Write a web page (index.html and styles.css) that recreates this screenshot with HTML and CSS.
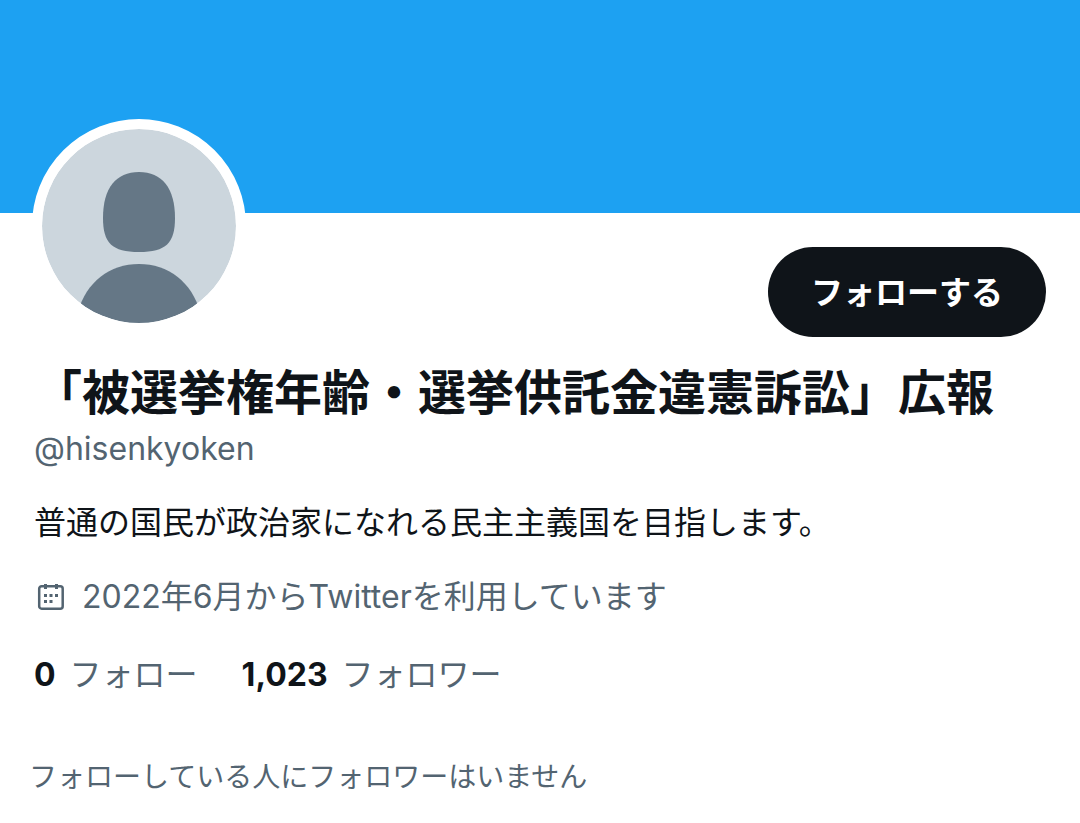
FILE: index.html
```html
<!DOCTYPE html>
<html lang="ja">
<head>
    <meta charset="UTF-8">
    <meta name="viewport" content="width=device-width, initial-scale=1.0">
    <title>profile</title>
    <link rel="stylesheet" href="styles.css">
</head>
<body>
    <div class="banner"></div>
    <div class="profile">
        <div class="top">
            <svg class="avatar" viewBox="0 0 194 194" role="img" aria-label="avatar">
                <defs>
                    <clipPath id="round"><circle cx="97" cy="97" r="97"/></clipPath>
                </defs>
                <g clip-path="url(#round)">
                    <rect width="194" height="194" fill="#ccd6dd"/>
                    <path fill="#657786" d="M97 43C120 43 133 59 133 89C133 114 124 123 97 123C70 123 61 114 61 89C61 59 74 43 97 43Z"/>
                    <path fill="#657786" d="M36 183C44 153 68 135 97 135C126 135 150 153 158 183V194H36Z"/>
                </g>
            </svg>
            <button class="follow" type="button">フォローする</button>
        </div>
        <h1 class="name">「被選挙権年齢・選挙供託金違憲訴訟」広報</h1>
        <p class="account">@hisenkyoken</p>
        <p class="bio">普通の国民が政治家になれる民主主義国を目指します。</p>
        <p class="joined">
            <svg class="calendar" viewBox="0 0 32 32" aria-hidden="true">
                <rect x="5.2" y="5.2" width="23.5" height="22.5" rx="2.5" fill="none" stroke="#536471" stroke-width="2.5"/>
                <path d="M11.5 3V8M22.5 3V8" stroke="#536471" stroke-width="3"/>
                <path d="M10 13h3v3h-3zM15.500 13h3v3h-3zM21 13h3v3h-3zM10 19h3v3h-3zM15.500 19h3v3h-3z" fill="#536471"/>
            </svg>
            <span>2022年6月からTwitterを利用しています</span>
        </p>
        <div class="counts">
            <a href="#"><b>0</b>フォロー</a>
            <a href="#"><b>1,023</b>フォロワー</a>
        </div>
        <p class="known">フォローしている人にフォロワーはいません</p>
    </div>
</body>
</html>
```
FILE: styles.css
```css
body, h1, p{
    margin: 0;
    padding: 0;
}
body{
    background: #fff;
    color: #0f1419;
    font-family: Inter, "Noto Sans CJK JP", sans-serif;
    font-size: 32px;
}
.banner{
    height: 213px;
    background: #1da1f2;
}
.profile{
    padding: 0 34px;
}
.top{
    display: flex;
    justify-content: space-between;
    align-items: flex-end;
    margin-top: -94px;
}
.avatar{
    width: 194px;
    height: 194px;
    margin-left: -2px;
    border: 10px solid #fff;
    border-radius: 50%;
    background: #fff;
}
.follow{
    height: 90px;
    padding: 0 43px 4px;
    margin-bottom: -4px;
    border: none;
    border-radius: 45px;
    background: #0f1419;
    color: #fff;
    font-family: inherit;
    font-size: 32px;
    font-weight: bold;
    cursor: pointer;
}
.name{
    margin-top: 32px;
    font-size: 48px;
    line-height: 56px;
    font-weight: bold;
}
.account{
    margin-top: 8px;
    line-height: 40px;
    color: #536471;
}
.bio{
    margin-top: 34px;
    line-height: 40px;
}
.joined{
    display: flex;
    align-items: center;
    gap: 16px;
    margin-top: 34px;
    line-height: 40px;
    color: #536471;
}
.calendar{
    width: 32px;
    height: 32px;
}
.counts{
    display: flex;
    gap: 44px;
    margin-top: 38px;
    line-height: 40px;
}
.counts a{
    color: #536471;
    text-decoration: none;
}
.counts b{
    margin-right: 14px;
    color: #0f1419;
}
.known{
    margin-top: 62px;
    margin-left: -5px;
    font-size: 28px;
    line-height: 40px;
    color: #536471;
}
```
